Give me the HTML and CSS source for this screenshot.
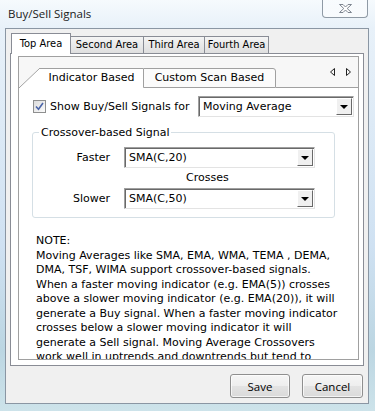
FILE: index.html
```html
<!DOCTYPE html>
<html lang="en">
<head>
  <meta charset="UTF-8" />
  <title>Buy/Sell Signals</title>
  <link rel="stylesheet" href="styles.css">
</head>
<body>

  <div class="window">
    <div class="titlebar">
      <span class="title">Buy/Sell Signals</span>
      <div class="close-btn">
        <svg width="15" height="11" viewBox="0 0 15 11">
          <path d="M1.5 1.5h3.5l2.5 2.5 2.5-2.5h3.5l-4.3 4 4.3 4h-3.5l-2.5-2.5-2.5 2.5h-3.5l4.3-4z" fill="#fff" stroke="#7d8590" stroke-width="1" stroke-linejoin="round"/>
        </svg>
      </div>
    </div>

    <div class="client">
      <div class="tabs">
        <div class="tab active">Top Area</div>
        <div class="tab tab-second">Second Area</div>
        <div class="tab tab-third">Third Area</div>
        <div class="tab tab-fourth">Fourth Area</div>
      </div>

      <div class="tab-panel">
        <div class="subtabs-box">
          <div class="subtabs">
            <div class="subtab active">Indicator Based</div>
            <div class="subtab">Custom Scan Based</div>
            <div class="subtabs-fill">
              <svg width="26" height="10" viewBox="0 0 26 10">
                <path d="M5.5 1.5v7l-4-3.5z" fill="none" stroke="#222" stroke-width="1"/>
                <path d="M17.5 1.5v7l4-3.5z" fill="none" stroke="#222" stroke-width="1"/>
              </svg>
            </div>
          </div>

          <div class="subpanel">
            <div class="show-row">
              <span class="checkbox">
                <svg width="9" height="9" viewBox="0 0 9 9">
                  <path d="M1 4.5l2.5 2.7 4.5-6.2" fill="none" stroke="#4a64a8" stroke-width="1.6"/>
                </svg>
              </span>
              <span>Show Buy/Sell Signals for</span>
              <div class="combo combo-type">
                <span class="combo-text">Moving Average</span>
                <span class="combo-btn"></span>
              </div>
            </div>

            <fieldset class="group">
              <legend>Crossover-based Signal</legend>
              <div class="signal-row">
                <span class="signal-label">Faster</span>
                <div class="combo combo-ma">
                  <span class="combo-text">SMA(C,20)</span>
                  <span class="combo-btn"></span>
                </div>
              </div>
              <div class="crosses">Crosses</div>
              <div class="signal-row">
                <span class="signal-label">Slower</span>
                <div class="combo combo-ma">
                  <span class="combo-text">SMA(C,50)</span>
                  <span class="combo-btn"></span>
                </div>
              </div>
            </fieldset>

            <p class="note">
              NOTE:<br>
              Moving Averages like SMA, EMA, WMA, TEMA , DEMA,<br>
              DMA, TSF, WIMA support crossover-based signals.<br>
              When a faster moving indicator (e.g. EMA(5)) crosses<br>
              above a slower moving indicator (e.g. EMA(20)), it will<br>
              generate a Buy signal. When a faster moving indicator<br>
              crosses below a slower moving indicator it will<br>
              generate a Sell signal. Moving Average Crossovers<br>
              work well in uptrends and downtrends but tend to
            </p>
          </div>
        </div>
      </div>

      <div class="buttons">
        <button class="btn btn-save">Save</button>
        <button class="btn btn-cancel">Cancel</button>
      </div>
    </div>
  </div>

</body>
</html>
```

FILE: styles.css
```css
html, body {
  margin: 0;
  height: 411px;
  overflow: hidden;
}

body {
  font-family: 'DejaVu Sans', Verdana, sans-serif;
  font-size: 11px;
  color: #000;
  background: linear-gradient(to bottom, #f6fafd 0, #e8f1f9 28px, #cfe1f2 60%, #bcd6e2 85%, #cde3ea 100%);
}

.window {
  height: 411px;
  box-sizing: border-box;
  padding-bottom: 7px;
  display: flex;
  flex-direction: column;
}

/* title bar */
.titlebar {
  height: 28px;
  display: flex;
  align-items: flex-start;
  flex-shrink: 0;
}

.title {
  font-family: 'Open Sans', 'Noto Sans', sans-serif;
  font-size: 11.5px;
  line-height: 16px;
  padding: 6px 0 0 8px;
  color: #1a1a1a;
}

.close-btn {
  margin-left: auto;
  margin-right: 7px;
  width: 44px;
  height: 17px;
  border: 1px solid #8f9aa5;
  border-top: none;
  border-radius: 0 0 4px 4px;
  background: linear-gradient(to bottom, rgba(255,255,255,0.3), rgba(255,255,255,0.6));
  display: flex;
  align-items: center;
  justify-content: center;
}

/* client area */
.client {
  flex: 1;
  margin: 0 6px 0 5px;
  border: 1px solid #8a96a3;
  background: #f0f0f0;
  display: flex;
  flex-direction: column;
}

.tabs {
  display: flex;
  align-items: flex-end;
  height: 24px;
  box-sizing: border-box;
  padding: 4px 0 0 5px;
  font-family: 'DejaVu Sans Condensed', 'DejaVu Sans', sans-serif;
}

.tab {
  box-sizing: border-box;
  height: 17px;
  border: 1px solid #898c95;
  border-bottom: none;
  background: linear-gradient(to bottom, #f5f5f5, #e9e9e9 50%, #dfdfdf);
  line-height: 14px;
  padding-top: 1px;
  text-align: center;
  margin-left: -1px;
}

.tab.active {
  height: 21px;
  width: 60px;
  margin-left: 0;
  margin-bottom: -1px;
  padding-top: 3px;
  background: #fff;
  position: relative;
  z-index: 1;
}

.tab-second { width: 74px; }
.tab-third { width: 62px; }
.tab-fourth { width: 65px; }

.tab-panel {
  height: 313px;
  box-sizing: border-box;
  margin: 0 4px;
  border: 1px solid #898c95;
  background: #fff;
  padding: 2px 4px 5px 7px;
}

/* inner tabs */
.subtabs-box {
  height: 100%;
  box-sizing: border-box;
  border: 1px solid #a0a0a0;
  display: flex;
  flex-direction: column;
}

.subtabs {
  display: flex;
  align-items: flex-end;
  height: 31px;
  background: #f7f7f7;
  flex-shrink: 0;
}

.subtab {
  box-sizing: border-box;
  height: 20px;
  line-height: 17px;
  text-align: center;
  border: 1px solid #a0a0a0;
  border-radius: 0 3px 0 0;
  background: #fbfbfb;
  width: 133px;
}

.subtab.active {
  width: 103px;
  margin-left: 21px;
  border-left: none;
  border-right: none;
  border-bottom: none;
  border-radius: 0;
  line-height: 18px;
  background: #fff;
  position: relative;
}

.subtab.active::before {
  content: "";
  position: absolute;
  left: -21px;
  top: -1px;
  width: 21px;
  height: 20px;
  background: linear-gradient(to bottom right, transparent calc(50% - 0.7px), #a0a0a0 50%, #fff calc(50% + 0.7px));
}

.subtabs-fill {
  flex: 1;
  align-self: stretch;
  border-bottom: 1px solid #a0a0a0;
  display: flex;
  justify-content: flex-end;
  align-items: flex-start;
  padding: 10px 3px 0 0;
}

.subpanel {
  flex: 1;
  overflow: hidden;
  background: #fff;
}

.show-row {
  display: flex;
  align-items: center;
  padding: 8px 4px 0 14px;
}

.checkbox {
  box-sizing: border-box;
  width: 13px;
  height: 13px;
  border: 1px solid #8e8f8f;
  background: linear-gradient(to bottom right, #dcdcdc, #fbfbfb);
  display: flex;
  align-items: center;
  justify-content: center;
  margin-right: 4px;
}

/* combo boxes */
.combo {
  box-sizing: border-box;
  height: 21px;
  display: flex;
  align-items: stretch;
  background: #fff;
  border: 1px solid;
  border-color: #a0a0a0 #e3e3e3 #e3e3e3 #a0a0a0;
  box-shadow: inset 1px 1px 0 #696969;
}

.combo-text {
  flex: 1;
  line-height: 19px;
  padding-left: 4px;
}

.combo-btn {
  width: 16px;
  margin: 1px 1px 1px 0;
  box-sizing: border-box;
  background: #f0f0f0;
  border: 1px solid;
  border-color: #fff #696969 #696969 #fff;
  position: relative;
}

.combo-btn::after {
  content: "";
  position: absolute;
  left: 3px;
  top: 6px;
  border-left: 4px solid transparent;
  border-right: 4px solid transparent;
  border-top: 4px solid #000;
}

.combo-type {
  width: 156px;
  margin-left: auto;
}

.combo-ma {
  width: 191px;
}

/* group box */
.group {
  margin: 9px 0 0 13px;
  width: 303px;
  box-sizing: border-box;
  border: 1px solid #d5dfe5;
  border-radius: 3px;
  padding: 8px 0 8px 0;
  min-inline-size: 0;
}

.group legend {
  margin-left: 6px;
  padding: 0 2px;
  line-height: 13px;
}

.signal-row {
  display: flex;
  align-items: center;
}

.signal-label {
  width: 77px;
  text-align: right;
  margin-right: 14px;
}

.crosses {
  line-height: 20px;
  padding-left: 153px;
}

.note {
  margin: 16px 0 0 17px;
  line-height: 14.5px;
  white-space: nowrap;
}

/* dialog buttons */
.buttons {
  display: flex;
  justify-content: flex-end;
  gap: 12px;
  padding: 8px 5px 0 0;
}

.btn {
  height: 24px;
  border: 1px solid #8f8f8f;
  border-radius: 3px;
  background: linear-gradient(to bottom, #f6f6f6 0, #eeeeee 50%, #e3e3e3 51%, #dadada 100%);
  box-shadow: inset 0 0 0 1px rgba(255,255,255,0.7);
  font-family: 'Open Sans', 'Noto Sans', sans-serif;
  font-size: 11.5px;
  color: #000;
  padding: 0;
}

.btn-save { width: 60px; }
.btn-cancel { width: 61px; }
```
